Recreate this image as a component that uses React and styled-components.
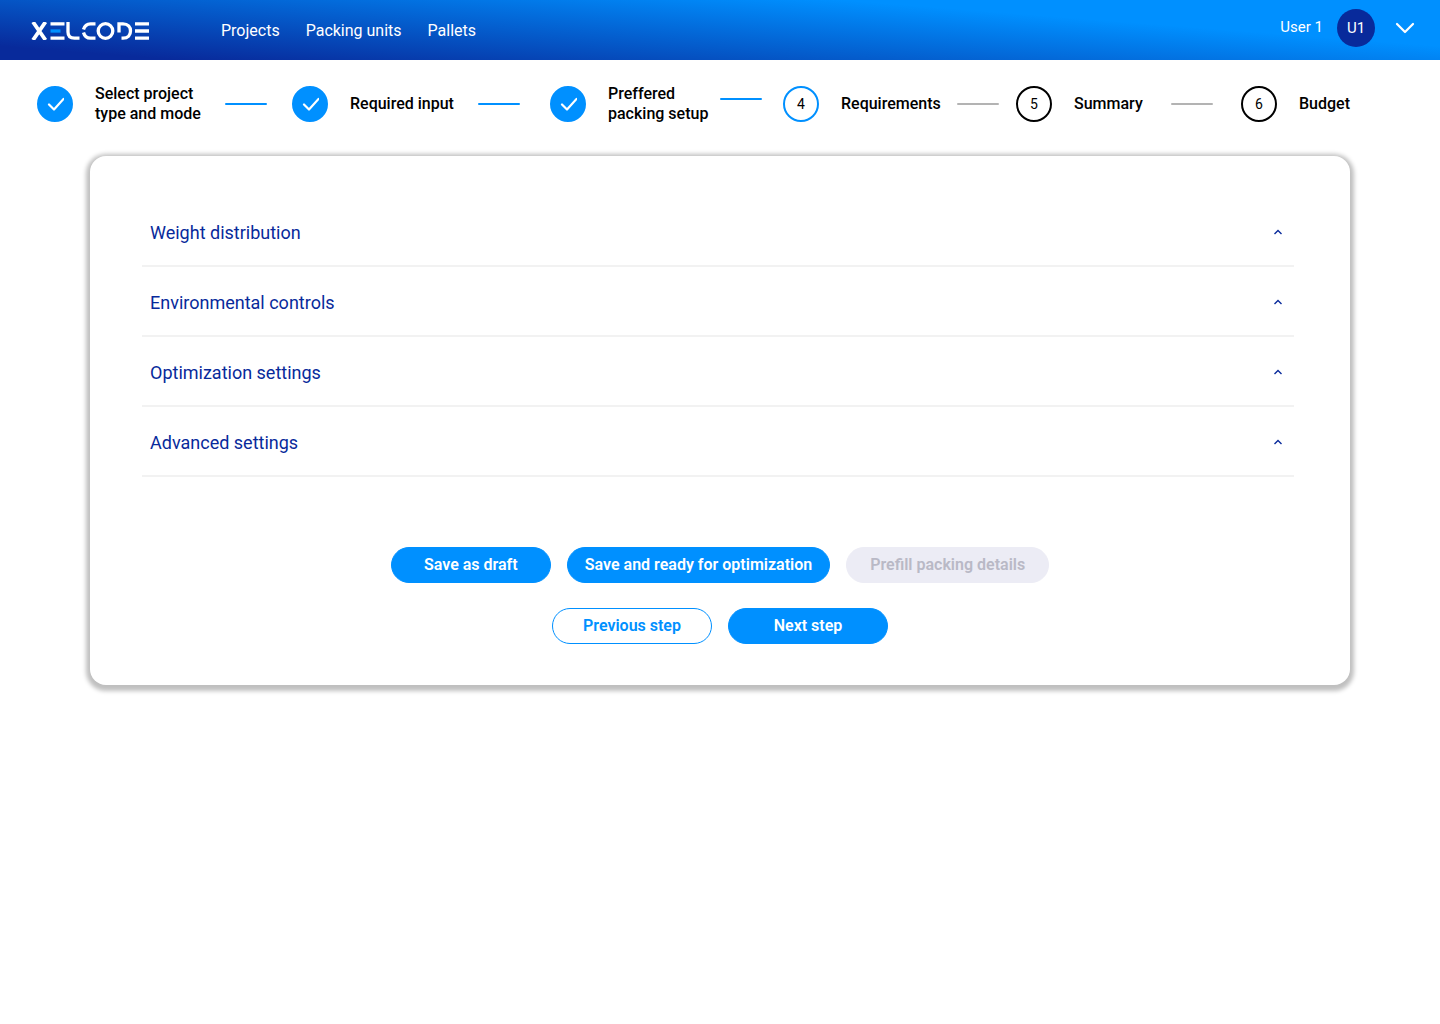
import React from "react";
import styled, { createGlobalStyle } from "styled-components";

const GlobalStyle = createGlobalStyle`
  *, *::before, *::after { box-sizing: border-box; }
  body {
    margin: 0;
    background: #fff;
    color: #000;
    font-family: Roboto, "Liberation Sans", sans-serif;
    font-size: 16px;
  }
  button { font: inherit; cursor: pointer; }
`;

const blue = "#0090ff";
const navy = "#082a9b";

const Header = styled.header`
  display: flex;
  align-items: center;
  height: 60px;
  padding: 2px 25px 0 31px;
  color: #fff;
  background: linear-gradient(4.4deg, ${navy} 8%, ${blue} 73%);
`;

const HomeLink = styled.a`
  display: flex;
`;

const Nav = styled.nav`
  display: flex;
  gap: 26px;
  margin-left: 72px;
`;

const NavLink = styled.a`
  color: #fff;
  line-height: 20px;
  text-decoration: none;
`;

const UserMenu = styled.button`
  display: flex;
  align-items: center;
  margin-left: auto;
  padding: 0 0 6px;
  border: 0;
  background: none;
  color: #fff;
  font-size: 15px;
`;

const UserName = styled.span`
  padding-bottom: 2px;
  line-height: 20px;
`;

const Avatar = styled.span`
  display: grid;
  place-items: center;
  width: 38px;
  height: 38px;
  margin: 0 20px 0 14px;
  border-radius: 50%;
  background: ${navy};
`;

const Stepper = styled.ol`
  display: grid;
  grid-template-columns: 255fr 258fr 233fr 233fr 225fr 199fr;
  margin: 0;
  padding: 24px 0 0 37px;
  list-style: none;
`;

const Step = styled.li`
  display: flex;
  align-items: center;
`;

const StepMark = styled.span`
  display: grid;
  place-items: center;
  flex: none;
  width: 36px;
  height: 36px;
  margin-right: 22px;
  border: 2px solid ${(p) => (p.$state === "todo" ? "#000" : blue)};
  border-radius: 50%;
  background: ${(p) => (p.$state === "done" ? blue : "#fff")};
  font-size: 14px;
`;

const StepLabel = styled.span`
  font-weight: 500;
  line-height: 20px;
  white-space: pre-line;
`;

const Connector = styled.span`
  flex: none;
  margin-left: ${(p) => p.$gap}px;
  padding-bottom: ${(p) => (p.$raised ? 10 : 0)}px;

  &::before {
    content: "";
    display: block;
    width: 42px;
    height: 2px;
    border-radius: 1px;
    background: ${(p) => (p.$done ? blue : "#b3b3b3")};
  }
`;

const Card = styled.main`
  margin: 32px 90px;
  padding: 41px 0;
  border-radius: 16px;
  background: #fff;
  box-shadow: 0 2px 4px 4px rgba(0, 0, 0, 0.25);
`;

const Sections = styled.div`
  padding: 0 56px 0 52px;
`;

const SectionTitle = styled.h2`
  margin: 0;
  border-bottom: 2px solid #f2f2f2;
  font-size: 18px;
  font-weight: 400;
`;

const SectionToggle = styled.button`
  display: flex;
  align-items: center;
  justify-content: space-between;
  width: 100%;
  height: 68px;
  padding: 2px 12px 0 8px;
  border: 0;
  background: none;
  color: ${navy};
  text-align: left;
`;

const Actions = styled.div`
  display: flex;
  flex-direction: column;
  gap: 25px;
  margin-top: 70px;
`;

const ActionRow = styled.div`
  display: flex;
  justify-content: center;
  gap: 16px;
`;

const Button = styled.button`
  min-width: 160px;
  height: 36px;
  padding: 0 ${(p) => (p.$wide ? 23 : 17)}px 2px;
  border: 1px solid ${blue};
  border-radius: 18px;
  background: ${(p) => (p.$outline ? "#fff" : blue)};
  color: ${(p) => (p.$outline ? blue : "#fff")};
  font-weight: 600;

  &:disabled {
    border-color: #ececf5;
    background: #ececf5;
    color: #b9b9c6;
    cursor: default;
  }
`;

const Logo = () => (
  <svg width="118" height="18" viewBox="0 0 118 18" fill="none" stroke="#fff" strokeWidth="3.3" role="img" aria-label="Xelcode">
    <path d="M2 0 L14.500 18 M14.500 0 L2 18" strokeWidth="3.8" />
    <path d="M19.500 1.800H33.500M19.500 16.200H33.500" />
    <path d="M19.500 9H29.500" stroke={blue} />
    <path d="M37 0V10Q37 16.200 43.500 16.200H48.500" />
    <path d="M52.500 7.500C53.500 4 56 1.800 59.500 1.800H64.500M52.500 10.500C53.500 14 56 16.200 59.500 16.200H64.500" />
    <circle cx="74.500" cy="9" r="7.300" />
    <path d="M88 10.500V1.800H92C97 1.800 99.500 5 99.500 9C99.500 13 97 16.200 92 16.200H90.500" />
    <path d="M104 1.800H118M104 9H118M104 16.200H118" />
  </svg>
);

const Check = () => (
  <svg width="18" height="14" viewBox="0 0 18 14" fill="none" stroke="#fff" strokeWidth="2.200" strokeLinecap="round" strokeLinejoin="round" aria-hidden="true">
    <path d="M3 7.500 L8 12.500 L17.500 2" />
  </svg>
);

const UserChevron = () => (
  <svg width="20" height="12" viewBox="0 0 20 12" fill="none" stroke="#fff" strokeWidth="2.200" strokeLinecap="round" strokeLinejoin="round" aria-hidden="true">
    <path d="M2 2L10 10L18 2" />
  </svg>
);

const SectionChevron = () => (
  <svg width="8" height="6" viewBox="0 0 8 6" fill="none" stroke={navy} strokeWidth="1.400" aria-hidden="true">
    <path d="M0.500 5L4 1.500L7.500 5" />
  </svg>
);

const steps = [
  { label: "Select project\ntype and mode", state: "done", gap: 24 },
  { label: "Required input", state: "done", gap: 24 },
  { label: "Preffered\npacking setup", state: "done", gap: 12, raised: true },
  { label: "Requirements", state: "current", gap: 16 },
  { label: "Summary", state: "todo", gap: 28 },
  { label: "Budget", state: "todo" },
];

const sections = [
  "Weight distribution",
  "Environmental controls",
  "Optimization settings",
  "Advanced settings",
];

export default function App() {
  return (
    <>
      <GlobalStyle />
      <Header>
        <HomeLink href="#home"><Logo /></HomeLink>
        <Nav>
          <NavLink href="#projects">Projects</NavLink>
          <NavLink href="#packing-units">Packing units</NavLink>
          <NavLink href="#pallets">Pallets</NavLink>
        </Nav>
        <UserMenu type="button">
          <UserName>User 1</UserName>
          <Avatar>U1</Avatar>
          <UserChevron />
        </UserMenu>
      </Header>
      <Stepper>
        {steps.map((step, i) => (
          <Step key={step.label} aria-current={step.state === "current" ? "step" : undefined}>
            <StepMark $state={step.state}>{step.state === "done" ? <Check /> : i + 1}</StepMark>
            <StepLabel>{step.label}</StepLabel>
            {step.gap && <Connector $gap={step.gap} $raised={step.raised} $done={step.state === "done"} />}
          </Step>
        ))}
      </Stepper>
      <Card>
        <Sections>
          {sections.map((title) => (
            <SectionTitle key={title}>
              <SectionToggle type="button" aria-expanded="false">
                {title}
                <SectionChevron />
              </SectionToggle>
            </SectionTitle>
          ))}
        </Sections>
        <Actions>
          <ActionRow>
            <Button type="button">Save as draft</Button>
            <Button type="button">Save and ready for optimization</Button>
            <Button type="button" $wide disabled>Prefill packing details</Button>
          </ActionRow>
          <ActionRow>
            <Button type="button" $outline>Previous step</Button>
            <Button type="button">Next step</Button>
          </ActionRow>
        </Actions>
      </Card>
    </>
  );
}
